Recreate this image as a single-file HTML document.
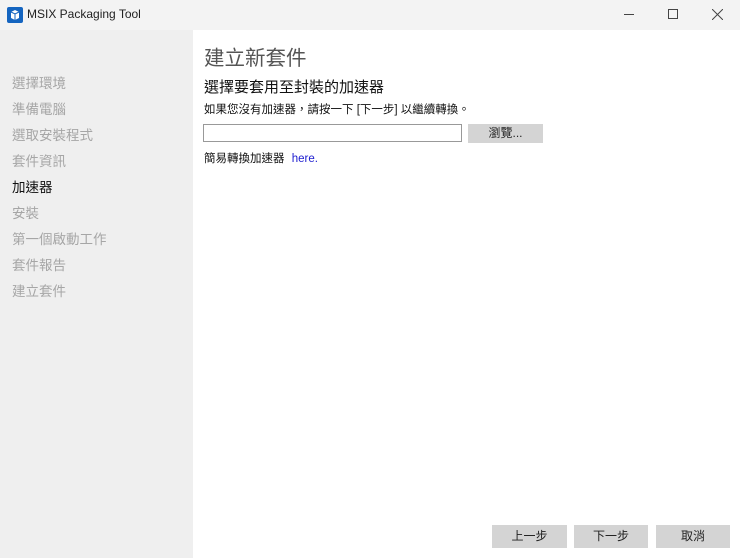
<!DOCTYPE html>
<html><head><meta charset="utf-8"><style>
*{margin:0;padding:0;box-sizing:border-box}
body{width:740px;height:558px;overflow:hidden;background:#fff;font-family:"Liberation Sans","Noto Sans CJK TC",sans-serif;position:relative}
.t{position:absolute;white-space:nowrap}
#tb{position:absolute;left:0;top:0;width:740px;height:30px;background:#f3f3f3}
#side{position:absolute;left:0;top:30px;width:193px;height:528px;background:#efefef}
.nav{position:absolute;left:12px;font-size:13.5px;color:#a6a6a6}
.btn{position:absolute;top:525px;height:23px;background:#d4d4d4;font-size:12px;text-align:center;line-height:23px;color:#222}
</style></head><body>
<div id="tb">
<svg class="t" style="left:7px;top:7px" width="16" height="16"><rect width="16" height="16" rx="2" fill="#1565c0"/><path d="M4 5l4-2 4 2v6l-4 2-4-2z" fill="#fff"/><path d="M8 7v6M4 5l4 2 4-2" stroke="#1565c0" fill="none"/></svg>
<div class="t" style="left:27px;top:7px;font-size:12px;color:#222">MSIX Packaging Tool</div>
<div class="t" style="left:624px;top:14px;width:10px;height:1px;background:#444"></div>
<div class="t" style="left:668px;top:9px;width:10px;height:10px;border:1px solid #444"></div>
<svg class="t" style="left:712px;top:9px" width="11" height="11"><path d="M0 0L11 11M11 0L0 11" stroke="#444"/></svg>
</div>
<div id="side"></div>
<div class="nav t" style="top:72px">選擇環境</div>
<div class="nav t" style="top:98px">準備電腦</div>
<div class="nav t" style="top:124px">選取安裝程式</div>
<div class="nav t" style="top:150px">套件資訊</div>
<div class="nav t" style="top:176px;color:#111">加速器</div>
<div class="nav t" style="top:202px">安裝</div>
<div class="nav t" style="top:228px">第一個啟動工作</div>
<div class="nav t" style="top:254px">套件報告</div>
<div class="nav t" style="top:280px">建立套件</div>
<div class="t" style="left:204px;top:41px;font-size:20.5px;color:#555">建立新套件</div>
<div class="t" style="left:204px;top:76px;font-size:15px;color:#111">選擇要套用至封裝的加速器</div>
<div class="t" style="left:204px;top:101px;font-size:11.5px;color:#111">如果您沒有加速器，請按一下 [下一步] 以繼續轉換。</div>
<div class="t" style="left:203px;top:124px;width:259px;height:18px;border:1px solid #999;background:#fff"></div>
<div class="t" style="left:468px;top:124px;width:75px;height:19px;background:#d4d4d4;font-size:12px;text-align:center;line-height:19px;color:#222">瀏覽...</div>
<div class="t" style="left:204px;top:150px;font-size:11.5px;color:#111">簡易轉換加速器 <span style="color:#2020d0;margin-left:4px">here.</span></div>
<div class="btn" style="left:492px;width:75px">上一步</div>
<div class="btn" style="left:574px;width:74px">下一步</div>
<div class="btn" style="left:656px;width:74px">取消</div>
</body></html>
